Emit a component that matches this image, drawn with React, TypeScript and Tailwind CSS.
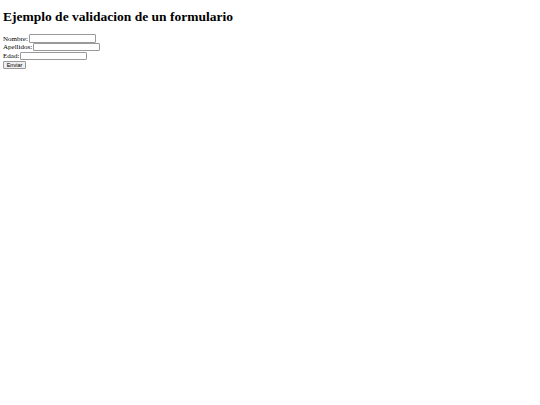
export default function App() {
  return (
    <div className="min-h-[405px] w-[540px] bg-white px-[3px] font-['Liberation_Serif',serif] text-black">
      <h1 className="pt-[9px] text-[13.5px] leading-[16px] font-bold">
        Ejemplo de validacion de un formulario
      </h1>
      <form className="mt-[9px] flex flex-col text-[7px] leading-[8px]">
        <div className="flex h-[8.7px] items-end gap-[1px]">
          <label>Nombre:</label>
          <input className="h-[8.5px] w-[67px] rounded-[1px] border border-[#999999] bg-white" type="text" />
        </div>
        <div className="flex h-[8.7px] items-end gap-[1px]">
          <label>Apellidos:</label>
          <input className="h-[8.5px] w-[67px] rounded-[1px] border border-[#999999] bg-white" type="text" />
        </div>
        <div className="flex h-[8.7px] items-end gap-[1px]">
          <label>Edad:</label>
          <input className="h-[8.5px] w-[67px] rounded-[1px] border border-[#999999] bg-white" type="text" />
        </div>
        <div className="flex h-[8.7px] items-end">
          <button
            type="button"
            className="h-[8px] w-[23px] rounded-[1px] border border-[#999999] bg-[#efefef] font-['Liberation_Sans',sans-serif] text-[5.5px] leading-[6px]"
          >
            Enviar
          </button>
        </div>
      </form>
    </div>
  );
}
